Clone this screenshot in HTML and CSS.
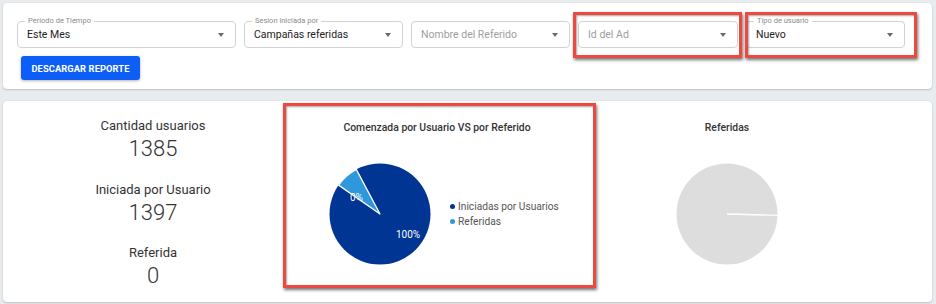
FILE: index.html
```html
<!DOCTYPE html>
<html lang="es">
<head>
<meta charset="utf-8">
<title>Reporte</title>
<link rel="stylesheet" href="styles.css">
</head>
<body>
<div class="page">
  <section class="card filters">
    <div class="field-row">
      <div class="field w-wide">
        <span class="float-label">Periodo de Tiempo</span>
        <span class="value">Este Mes</span>
        <span class="arrow"></span>
      </div>
      <div class="field">
        <span class="float-label">Sesion iniciada por</span>
        <span class="value">Campañas referidas</span>
        <span class="arrow"></span>
      </div>
      <div class="field">
        <span class="value placeholder">Nombre del Referido</span>
        <span class="arrow"></span>
      </div>
      <div class="field w-160">
        <span class="value placeholder">Id del Ad</span>
        <span class="arrow"></span>
      </div>
      <div class="field">
        <span class="float-label">Tipo de usuario</span>
        <span class="value">Nuevo</span>
        <span class="arrow"></span>
      </div>
    </div>
    <button class="btn">DESCARGAR REPORTE</button>
  </section>

  <section class="card stats">
    <div class="col col-stats">
      <div class="stat">
        <div class="stat-title">Cantidad usuarios</div>
        <div class="stat-num">1385</div>
      </div>
      <div class="stat">
        <div class="stat-title">Iniciada por Usuario</div>
        <div class="stat-num">1397</div>
      </div>
      <div class="stat">
        <div class="stat-title">Referida</div>
        <div class="stat-num">0</div>
      </div>
    </div>

    <div class="col col-chart">
      <div class="chart-title">Comenzada por Usuario VS por Referido</div>
      <div class="chart-row">
        <svg class="pie" width="102" height="102" viewBox="-51 -51 102 102">
          <circle cx="0" cy="0" r="50.5" fill="#003594"/>
          <path d="M0 0 L-23.7 -44.6 A50.5 50.5 0 0 0 -41.4 -28.9 Z" fill="#2f98dd" stroke="#ffffff" stroke-width="1.3" stroke-linejoin="round"/>
          <text x="-30" y="-13" class="pie-lbl">0%</text>
          <text x="28" y="24" class="pie-lbl" text-anchor="middle">100%</text>
        </svg>
        <ul class="legend">
          <li><span class="dot dark"></span>Iniciadas por Usuarios</li>
          <li><span class="dot light"></span>Referidas</li>
        </ul>
      </div>
    </div>

    <div class="col col-ref">
      <div class="chart-title">Referidas</div>
      <svg class="pie grey" width="102" height="102" viewBox="-51 -51 102 102">
        <circle cx="0" cy="0" r="50.5" fill="#dddddd"/>
        <line x1="0" y1="0" x2="51" y2="1.4" stroke="#ffffff" stroke-width="1.3"/>
      </svg>
    </div>
  </section>

  <div class="mark mark-ad"></div>
  <div class="mark mark-tipo"></div>
  <div class="mark mark-chart"></div>
</div>
</body>
</html>
```

FILE: styles.css
```css
* { box-sizing: border-box; }
html, body {
  margin: 0;
  padding: 0;
  background: #e9ecef;
  font-family: Roboto, "Liberation Sans", Arial, sans-serif;
  color: #333;
}
.page {
  position: relative;
  padding: 3px 4px 0 3px;
  width: 936px;
  height: 304px;
  overflow: hidden;
}
.card {
  background: #fff;
  border-radius: 4px;
  box-shadow: 0 1px 2px rgba(0,0,0,0.18), 0 0 1px rgba(0,0,0,0.12);
}
.filters {
  height: 86px;
  padding: 18px 14px 9px 14px;
}
.field-row {
  display: flex;
  gap: 8px;
}
.field {
  position: relative;
  width: 159px;
  height: 27px;
  border: 1px solid #d2d2d2;
  border-radius: 4px;
  display: flex;
  align-items: center;
  padding: 0 11px 0 9px;
}
.field.w-wide { width: 219px; }
.field.w-160 { width: 160px; }
.float-label {
  position: absolute;
  top: -6px;
  left: 7px;
  padding: 0 3px;
  background: #fff;
  font-size: 7.5px;
  line-height: 10px;
  color: #8a8a8a;
}
.value {
  flex: 1;
  font-size: 10.5px;
  color: #222;
  white-space: nowrap;
}
.value.placeholder { color: #9e9e9e; }
.arrow {
  width: 0;
  height: 0;
  border-left: 3.5px solid transparent;
  border-right: 3.5px solid transparent;
  border-top: 4px solid #6b6b6b;
}
.btn {
  display: block;
  margin: 8px 0 0 4px;
  width: 119px;
  height: 24px;
  border: none;
  border-radius: 3px;
  background: #0d5ef7;
  color: #fff;
  font-family: Roboto, "Liberation Sans", Arial, sans-serif;
  font-weight: 700;
  font-size: 9.3px;
  letter-spacing: 0.1px;
  padding: 0;
  box-shadow: 0 1px 3px rgba(0,0,0,0.3);
}
.stats {
  margin-top: 12px;
  height: 201px;
  display: grid;
  grid-template-columns: 280px 290px 288px;
  padding-left: 10px;
}
.col-stats {
  padding-top: 17px;
  display: flex;
  flex-direction: column;
  align-items: center;
  gap: 19.5px;
}
.stat { text-align: center; }
.stat-title {
  font-size: 13px;
  line-height: 16px;
  font-weight: 400;
  color: #333;
}
.stat-num {
  margin-top: 2px;
  font-size: 22px;
  line-height: 26px;
  font-weight: 300;
  color: #333;
}
.col-chart, .col-ref {
  padding-top: 21px;
  display: flex;
  flex-direction: column;
}
.chart-title {
  font-size: 10.4px;
  line-height: 12px;
  font-weight: 500;
  color: #333;
  text-align: center;
}
.col-chart .chart-title { margin-left: -2px; }
.chart-row {
  margin-top: 29px;
  display: flex;
  align-items: center;
  padding-left: 36px;
  gap: 19px;
}
.pie { display: block; }
.col-ref .pie {
  margin: 29px auto 0 auto;
}
.pie-lbl {
  font-family: Roboto, "Liberation Sans", Arial, sans-serif;
  font-size: 10px;
  fill: #ffffff;
  font-weight: 400;
}
.legend {
  list-style: none;
  margin: 0;
  padding: 0;
  font-size: 10.2px;
  line-height: 15px;
  color: #555;
}
.legend li {
  display: flex;
  align-items: center;
  gap: 3px;
}
.dot {
  width: 5px;
  height: 5px;
  border-radius: 50%;
  display: inline-block;
}
.dot.dark { background: #003594; }
.dot.light { background: #2f98dd; }
.mark {
  position: absolute;
  border: 3px solid #ec4a3e;
  box-shadow: 1px 2px 3px rgba(0,0,0,0.55), inset 1px 1px 2px rgba(0,0,0,0.35);
}
.mark-ad { left: 573px; top: 12px; width: 169px; height: 46px; }
.mark-tipo { left: 745px; top: 12px; width: 172px; height: 46px; }
.mark-chart { left: 283px; top: 103px; width: 313px; height: 185px; }
```
